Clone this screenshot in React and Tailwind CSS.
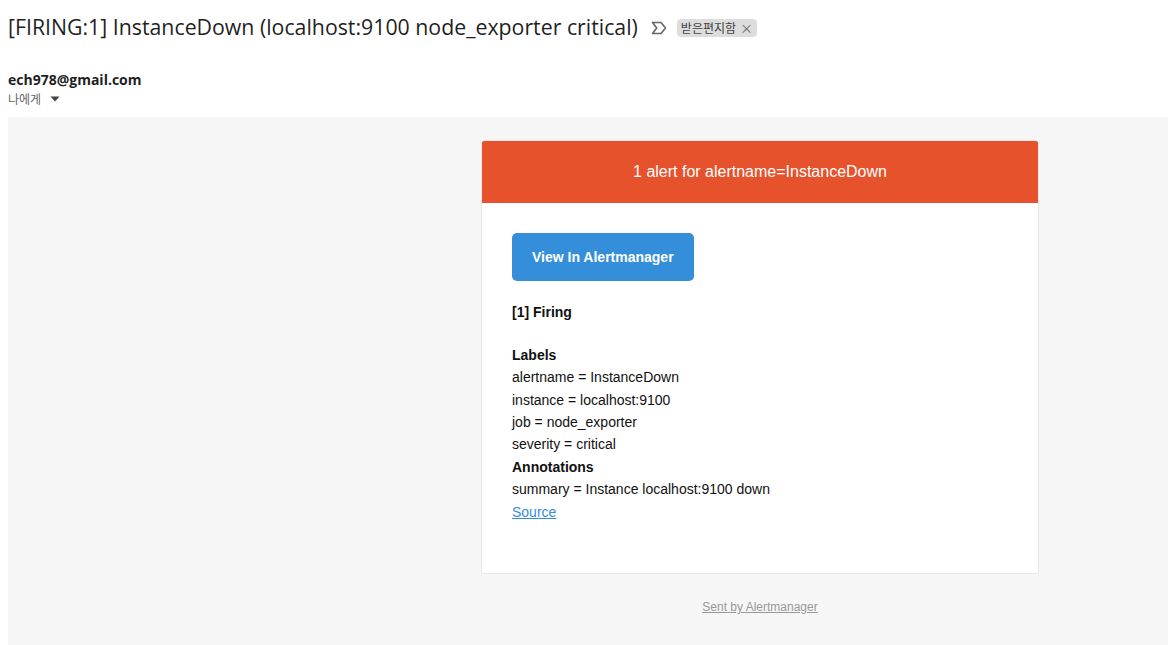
export default function App() {
  const labels = [
    'alertname = InstanceDown',
    'instance = localhost:9100',
    'job = node_exporter',
    'severity = critical',
  ]

  return (
    <div className="w-[1168px] h-[645px] overflow-hidden bg-white" style={{ fontFamily: 'Roboto, "Noto Sans CJK KR", sans-serif' }}>
      {/* subject line */}
      <div className="flex items-center pl-2 pt-[10px] h-[44px]">
        <h1 className="text-[21.3px] leading-[28px] text-[#1f1f1f] font-normal" style={{ fontFamily: '"Open Sans", Roboto, sans-serif' }}>
          [FIRING:1] InstanceDown (localhost:9100 node_exporter critical)
        </h1>
        <svg className="ml-[13px] mt-[1px]" width="16" height="14" viewBox="0 0 16 14" fill="none">
          <path d="M1.5 1.5h8.5l4.5 5.5-4.5 5.5h-8.5l4.2-5.5z" stroke="#666" strokeWidth="1.6" strokeLinejoin="round" />
        </svg>
        <span className="ml-[10px] mt-[1px] flex items-center gap-[4px] bg-[#dddddd] rounded-[4px] px-[4px] h-[18px] text-[12px] text-[#444] leading-none" style={{ fontFamily: '"Noto Sans CJK KR", sans-serif' }}>
          받은편지함
          <span className="text-[#666] text-[13px]">×</span>
        </span>
      </div>

      {/* sender */}
      <div className="pl-2 pt-[27px]">
        <div className="text-[14px] font-bold text-[#1f1f1f] leading-[18px]" style={{ fontFamily: '"Open Sans", Roboto, sans-serif' }}>ech978@gmail.com</div>
        <div className="flex items-center gap-[9px] text-[12px] text-[#5f6368] leading-[19px]" style={{ fontFamily: '"Noto Sans CJK KR", sans-serif' }}>
          나에게
          <svg width="10" height="6" viewBox="0 0 10 6"><path d="M0.5 0.5h9L5 5.5z" fill="#444" /></svg>
        </div>
      </div>

      {/* email body */}
      <div className="ml-2 mt-[9px] h-[540px] bg-[#f6f6f6] pt-[23px] pl-[473px]" style={{ fontFamily: '"Liberation Sans", Arial, sans-serif' }}>
        <div className="w-[558px]">
          <div className="bg-white border border-[#e9e9e9] rounded-[3px] overflow-hidden">
            <div className="bg-[#e6522c] text-white text-[16px] leading-[22.4px] text-center py-[20px]">
              1 alert for alertname=InstanceDown
            </div>
            <div className="p-[30px] text-[14px] leading-[22.4px] text-[#111]">
              <div className="pb-[20px]">
                <a className="inline-block bg-[#348eda] text-white font-bold rounded-[5px] px-[20px] py-[10px] leading-[28px]">
                  View In Alertmanager
                </a>
              </div>
              <div className="pb-[20px] font-bold">[1] Firing</div>
              <div className="pb-[20px]">
                <div className="font-bold">Labels</div>
                {labels.map(l => (
                  <div key={l}>{l}</div>
                ))}
                <div className="font-bold">Annotations</div>
                <div>summary = Instance localhost:9100 down</div>
                <a className="text-[#348eda] underline">Source</a>
              </div>
            </div>
          </div>
          <div className="text-center pt-[24px] text-[12px] leading-[19px]">
            <a className="text-[#999] underline">Sent by Alertmanager</a>
          </div>
        </div>
      </div>
    </div>
  )
}
